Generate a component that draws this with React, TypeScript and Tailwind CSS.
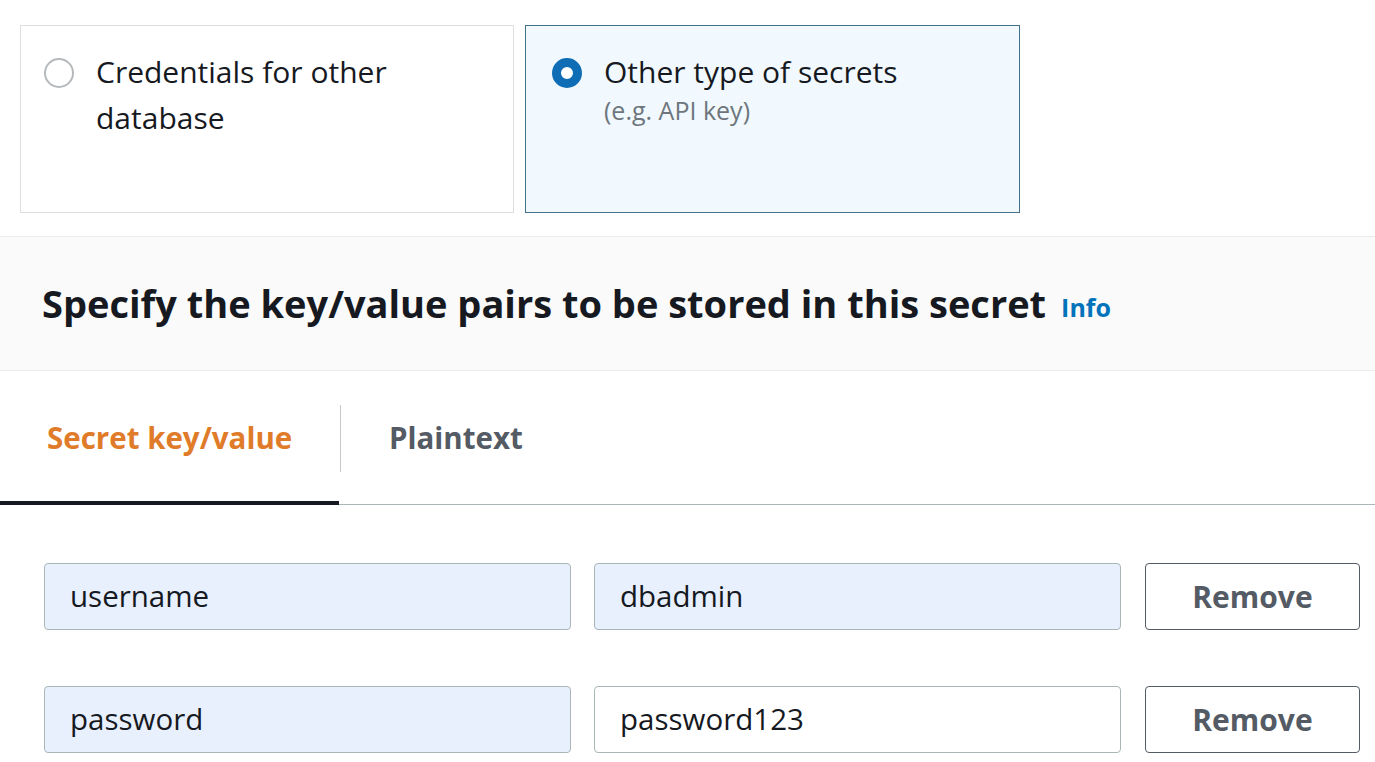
import React from "react";

const font = { fontFamily: '"Open Sans", "Noto Sans", sans-serif' };

function RadioCard({
  selected,
  title,
  sub,
}: {
  selected?: boolean;
  title: React.ReactNode;
  sub?: string;
}) {
  return (
    <div
      className={
        selected
          ? "flex h-[188px] w-[495px] gap-[22px] border border-[#44708a] bg-[#f1f9fe] pl-[26px] pt-[23px]"
          : "flex h-[188px] w-[494px] gap-[22px] border border-[#dcdfe0] bg-white pl-[23px] pt-[23px]"
      }
    >
      {selected ? (
        <div className="mt-[9px] h-[30px] w-[30px] shrink-0 rounded-full border-[9px] border-[#0f6db5] bg-white" />
      ) : (
        <div className="mt-[9px] h-[30px] w-[30px] shrink-0 rounded-full border-2 border-[#b5b9bb] bg-white" />
      )}
      <div>
        <div className="text-[30px] leading-[46px] text-[#16191f]">{title}</div>
        {sub && <div className="text-[25px] leading-[30px] text-[#6e767d]">{sub}</div>}
      </div>
    </div>
  );
}

function Row({ k, v, vFilled }: { k: string; v: string; vFilled?: boolean }) {
  return (
    <div className="flex items-center">
      <div className="ml-[44px] flex h-[67px] w-[527px] items-center rounded-[4px] border border-[#aab7b8] bg-[#e8f0fe] pl-[25px] text-[29.5px] text-[#16191f]">
        {k}
      </div>
      <div
        className={
          "ml-[23px] flex h-[67px] w-[527px] items-center rounded-[4px] border border-[#aab7b8] pl-[25px] text-[29.5px] text-[#16191f] " +
          (vFilled ? "bg-[#e8f0fe]" : "bg-white")
        }
      >
        {v}
      </div>
      <button className="ml-[24px] flex h-[67px] w-[215px] items-center justify-center rounded-[4px] border border-[#545b64] bg-white text-[30px] font-bold text-[#545b64]">
        Remove
      </button>
    </div>
  );
}

export default function App() {
  return (
    <div className="h-[762px] w-[1375px] overflow-hidden bg-white" style={font}>
      {/* Secret type cards */}
      <div className="flex gap-[11px] pl-[20px] pt-[25px]">
        <RadioCard title={<>Credentials for other<br />database</>} />
        <RadioCard selected title="Other type of secrets" sub="(e.g. API key)" />
      </div>

      {/* Section header */}
      <div className="mt-[23px] flex h-[135px] items-center border-y border-[#eaeded] bg-[#fafafa] pl-[42px]">
        <h2 className="text-[38px] font-bold text-[#16191f]">
          Specify the key/value pairs to be stored in this secret
        </h2>
        <span className="ml-[15px] mt-[8px] text-[25px] font-bold text-[#0073bb]">Info</span>
      </div>

      {/* Tabs */}
      <div className="flex border-b border-[#aab7b8] pt-[34px]">
        <div className="relative flex h-[99px] w-[340px] items-start pl-[47px]">
          <span className="text-[29.5px] font-bold leading-[66px] text-[#e07b2a]">Secret key/value</span>
          <div className="absolute bottom-[-1px] left-0 h-[4px] w-[339px] bg-[#16191f]" />
        </div>
        <div className="h-[67px] w-px bg-[#c6c9ca]" />
        <div className="pl-[48px] text-[29.5px] font-bold leading-[66px] text-[#545b64]">Plaintext</div>
      </div>

      {/* Key/value rows */}
      <div className="mt-[58px] flex flex-col gap-[56px]">
        <Row k="username" v="dbadmin" vFilled />
        <Row k="password" v="password123" />
      </div>
    </div>
  );
}
